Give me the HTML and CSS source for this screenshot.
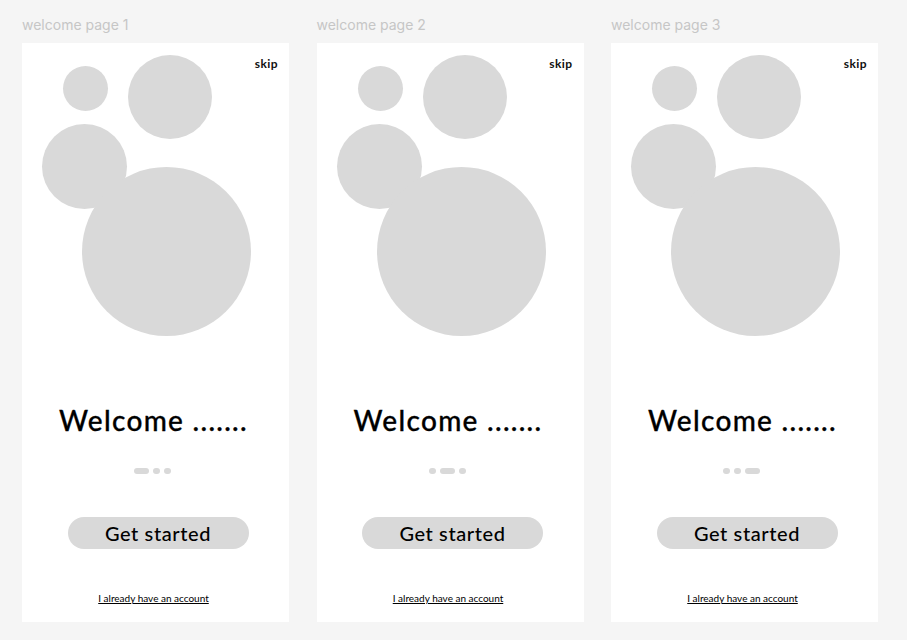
FILE: index.html
```html
<!DOCTYPE html>
<html>
<head>
<meta charset="utf-8">
<link rel="stylesheet" href="styles.css">
</head>
<body>
<div class="board">
  <section class="col">
    <div class="label">welcome page 1</div>
    <div class="frame">
      <div class="art">
        <svg class="bubbles" width="267" height="294" viewBox="0 0 267 294">
          <circle cx="63.5" cy="45.5" r="22.5"/>
          <circle cx="148" cy="54" r="42"/>
          <circle cx="62.5" cy="123.5" r="42.5"/>
          <circle cx="144.5" cy="208.5" r="84.5"/>
        </svg>
        <span class="skip">skip</span>
      </div>
      <h1 class="title">Welcome .......</h1>
      <div class="dots"><span class="dot active"></span><span class="dot"></span><span class="dot"></span></div>
      <button class="cta">Get started</button>
      <a class="link" href="#">I already have an account</a>
    </div>
  </section>
  <section class="col">
    <div class="label">welcome page 2</div>
    <div class="frame">
      <div class="art">
        <svg class="bubbles" width="267" height="294" viewBox="0 0 267 294">
          <circle cx="63.5" cy="45.5" r="22.5"/>
          <circle cx="148" cy="54" r="42"/>
          <circle cx="62.5" cy="123.5" r="42.5"/>
          <circle cx="144.5" cy="208.5" r="84.5"/>
        </svg>
        <span class="skip">skip</span>
      </div>
      <h1 class="title">Welcome .......</h1>
      <div class="dots"><span class="dot"></span><span class="dot active"></span><span class="dot"></span></div>
      <button class="cta">Get started</button>
      <a class="link" href="#">I already have an account</a>
    </div>
  </section>
  <section class="col">
    <div class="label">welcome page 3</div>
    <div class="frame">
      <div class="art">
        <svg class="bubbles" width="267" height="294" viewBox="0 0 267 294">
          <circle cx="63.5" cy="45.5" r="22.5"/>
          <circle cx="148" cy="54" r="42"/>
          <circle cx="62.5" cy="123.5" r="42.5"/>
          <circle cx="144.5" cy="208.5" r="84.5"/>
        </svg>
        <span class="skip">skip</span>
      </div>
      <h1 class="title">Welcome .......</h1>
      <div class="dots"><span class="dot"></span><span class="dot"></span><span class="dot active"></span></div>
      <button class="cta">Get started</button>
      <a class="link" href="#">I already have an account</a>
    </div>
  </section>
</div>
</body>
</html>
```

FILE: styles.css
```css
html, body {
  margin: 0;
  padding: 0;
  background: #f5f5f5;
}
body {
  width: 907px;
  height: 640px;
  overflow: hidden;
  font-family: Lato, "Open Sans", sans-serif;
}
.board {
  display: flex;
  gap: 27.5px;
  padding: 16px 0 0 22px;
}
.col {
  display: flex;
  flex-direction: column;
  width: 267px;
}
.label {
  font-family: Inter, "Noto Sans", sans-serif;
  font-size: 14px;
  line-height: 18px;
  color: #c6c6c6;
  height: 27px;
}
.frame {
  width: 267px;
  height: 579px;
  background: #ffffff;
  display: flex;
  flex-direction: column;
  align-items: center;
}
.art {
  position: relative;
  width: 267px;
  height: 294px;
}
.bubbles {
  display: block;
  fill: #d9d9d9;
}
.skip {
  position: absolute;
  top: 14px;
  right: 11px;
  font-size: 12px;
  line-height: 14px;
  font-weight: 700;
  letter-spacing: 0.4px;
  color: #111;
}
.title {
  margin: 66px 4px 0 0;
  font-size: 28px;
  line-height: 34px;
  font-weight: 500;
  color: #000;
  letter-spacing: 1.3px;
  -webkit-text-stroke: 0.3px #000;
}
.dots {
  margin: 31px 6px 0 0;
  display: flex;
  gap: 4px;
  height: 6px;
}
.dot {
  width: 7px;
  height: 6px;
  border-radius: 3px;
  background: #d9d9d9;
}
.dot.active {
  width: 15px;
}
.cta {
  margin: 43px 0 0 5px;
  width: 181px;
  height: 32px;
  border: 0;
  border-radius: 16px;
  background: #d9d9d9;
  font-family: Lato, "Open Sans", sans-serif;
  font-size: 20px;
  font-weight: 500;
  color: #000;
  letter-spacing: 0.6px;
  padding: 0;
}
.link {
  margin: 42px 4px 0 0;
  font-size: 10px;
  line-height: 14px;
  color: #000;
  text-decoration: underline;
}
```
